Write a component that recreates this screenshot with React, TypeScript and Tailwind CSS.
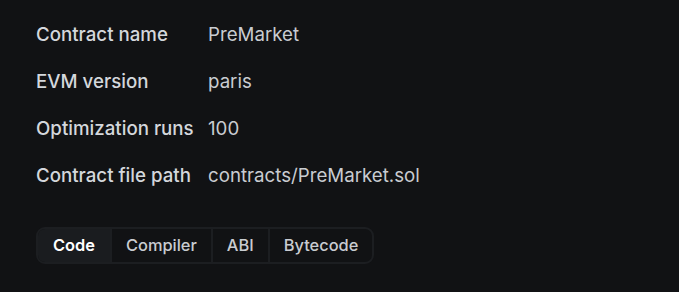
const DETAILS = [
  { label: "Contract name", value: "PreMarket" },
  { label: "EVM version", value: "paris" },
  { label: "Optimization runs", value: "100" },
  { label: "Contract file path", value: "contracts/PreMarket.sol" },
];

const TABS = ["Code", "Compiler", "ABI", "Bytecode"];

export default function App() {
  return (
    <div
      className="h-[292px] w-full bg-[#111214] px-9 pt-[12px]"
      style={{ fontFamily: "Inter, 'Noto Sans', sans-serif" }}
    >
      <dl className="flex flex-col">
        {DETAILS.map((row) => (
          <div key={row.label} className="flex h-[47px] items-center">
            <dt className="w-[172px] text-[18.7px] font-medium text-[#d4d7dc]">
              {row.label}
            </dt>
            <dd className="text-[18.7px] text-[#c9ccd1]">{row.value}</dd>
          </div>
        ))}
      </dl>

      <div className="mt-[27px] inline-flex h-[37px] overflow-hidden rounded-[9px] border-2 border-[#1c1e21]">
        {TABS.map((tab, i) => (
          <button
            key={tab}
            className={
              i === 0
                ? "flex items-center bg-[#1a1c1f] px-[15px] text-[16.4px] font-semibold text-white"
                : "flex items-center border-l-2 border-[#1c1e21] px-[14px] text-[16.4px] font-medium text-[#c9ccd1]"
            }
          >
            {tab}
          </button>
        ))}
      </div>
    </div>
  );
}
